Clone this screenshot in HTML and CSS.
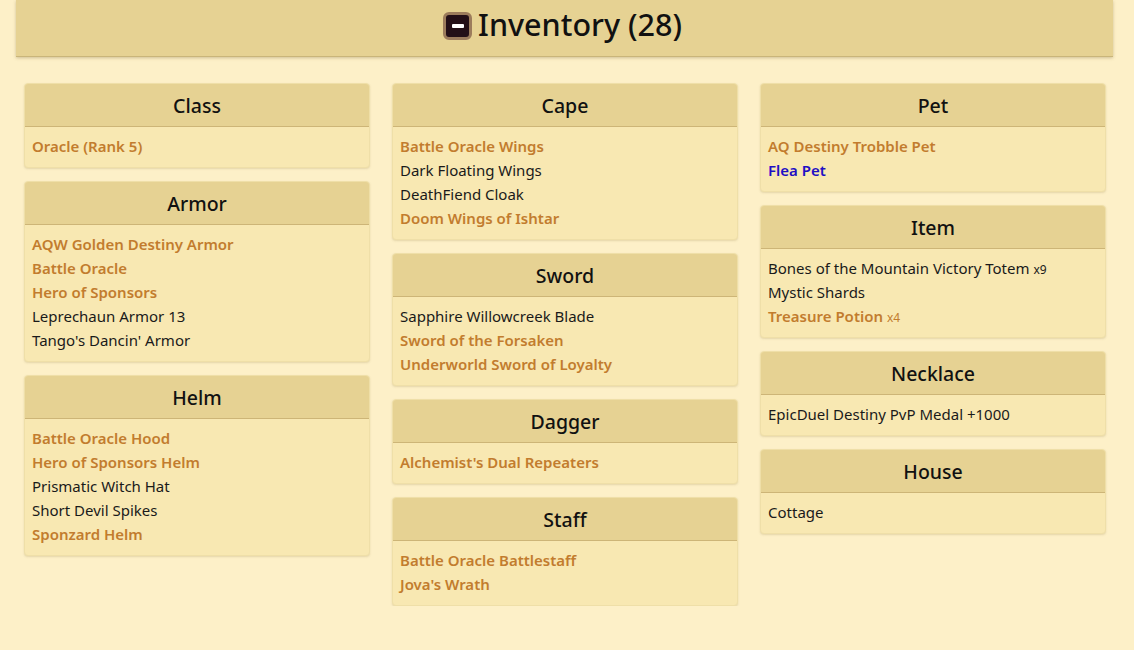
FILE: index.html
```html
<!DOCTYPE html>
<html lang="en">

<head>
    <meta charset="UTF-8">
    <meta name="viewport" content="width=device-width, initial-scale=1.0">
    <link rel="stylesheet" href="styles.css">
    <title>Inventory</title>
</head>

<body>
    <div class="top">
        <h1 class="title">
            <span class="toggle"><span class="bar"></span></span>
            Inventory (28)
        </h1>
    </div>

    <div class="columns">
        <div class="column">
            <div class="card">
                <h2 class="card-head">Class</h2>
                <div class="card-body">
                    <a class="item rare">Oracle (Rank 5)</a>
                </div>
            </div>
            <div class="card">
                <h2 class="card-head">Armor</h2>
                <div class="card-body">
                    <a class="item rare">AQW Golden Destiny Armor</a>
                    <a class="item rare">Battle Oracle</a>
                    <a class="item rare">Hero of Sponsors</a>
                    <a class="item">Leprechaun Armor 13</a>
                    <a class="item">Tango's Dancin' Armor</a>
                </div>
            </div>
            <div class="card">
                <h2 class="card-head">Helm</h2>
                <div class="card-body">
                    <a class="item rare">Battle Oracle Hood</a>
                    <a class="item rare">Hero of Sponsors Helm</a>
                    <a class="item">Prismatic Witch Hat</a>
                    <a class="item">Short Devil Spikes</a>
                    <a class="item rare">Sponzard Helm</a>
                </div>
            </div>
        </div>

        <div class="column">
            <div class="card">
                <h2 class="card-head">Cape</h2>
                <div class="card-body">
                    <a class="item rare">Battle Oracle Wings</a>
                    <a class="item">Dark Floating Wings</a>
                    <a class="item">DeathFiend Cloak</a>
                    <a class="item rare">Doom Wings of Ishtar</a>
                </div>
            </div>
            <div class="card">
                <h2 class="card-head">Sword</h2>
                <div class="card-body">
                    <a class="item">Sapphire Willowcreek Blade</a>
                    <a class="item rare">Sword of the Forsaken</a>
                    <a class="item rare">Underworld Sword of Loyalty</a>
                </div>
            </div>
            <div class="card">
                <h2 class="card-head">Dagger</h2>
                <div class="card-body">
                    <a class="item rare">Alchemist's Dual Repeaters</a>
                </div>
            </div>
            <div class="card">
                <h2 class="card-head">Staff</h2>
                <div class="card-body">
                    <a class="item rare">Battle Oracle Battlestaff</a>
                    <a class="item rare">Jova's Wrath</a>
                </div>
            </div>
        </div>

        <div class="column">
            <div class="card">
                <h2 class="card-head">Pet</h2>
                <div class="card-body">
                    <a class="item rare">AQ Destiny Trobble Pet</a>
                    <a class="item special">Flea Pet</a>
                </div>
            </div>
            <div class="card">
                <h2 class="card-head">Item</h2>
                <div class="card-body">
                    <a class="item">Bones of the Mountain Victory Totem <small>x9</small></a>
                    <a class="item">Mystic Shards</a>
                    <a class="item rare">Treasure Potion <small>x4</small></a>
                </div>
            </div>
            <div class="card">
                <h2 class="card-head">Necklace</h2>
                <div class="card-body">
                    <a class="item">EpicDuel Destiny PvP Medal +1000</a>
                </div>
            </div>
            <div class="card">
                <h2 class="card-head">House</h2>
                <div class="card-body">
                    <a class="item">Cottage</a>
                </div>
            </div>
        </div>
    </div>
</body>

</html>
```

FILE: styles.css
```css
* {
    margin: 0;
    padding: 0;
    box-sizing: border-box;
}

body {
    background: #fdf0c8;
    color: #1a1a1a;
    font-family: "Noto Sans", "Open Sans", sans-serif;
    padding: 0 21px 0 16px;
}

.top {
    background: #e6d293;
    border-bottom: 1px solid #c9b57a;
    box-shadow: 0 1px 3px rgba(120, 100, 50, 0.35);
    height: 57px;
    display: flex;
    align-items: center;
    justify-content: center;
}

.title {
    display: flex;
    align-items: center;
    gap: 6px;
    font-size: 30.5px;
    font-weight: 500;
    color: #111;
    margin: -8px 4px 0 0;
}

.toggle {
    width: 29px;
    height: 28px;
    border-radius: 6px;
    background: #230f17;
    border: 3px solid #9c7c5c;
    display: flex;
    align-items: center;
    justify-content: center;
    margin-top: 3px;
}

.toggle .bar {
    width: 12px;
    height: 4px;
    background: #fff;
    border-radius: 1px;
}

.columns {
    display: grid;
    grid-template-columns: repeat(3, 346px);
    column-gap: 22px;
    padding: 26px 0 0 8px;
    align-items: start;
}

.column {
    display: flex;
    flex-direction: column;
    gap: 13px;
}

.card {
    background: #f8e8b2;
    border: 1px solid #efdfa8;
    border-radius: 4px;
    box-shadow: 0 1px 2px rgba(160, 140, 80, 0.25);
    overflow: hidden;
}

.card-head {
    background: #e6d293;
    border-bottom: 1px solid #cdb577;
    height: 43px;
    line-height: 42px;
    padding-top: 1px;
    text-align: center;
    font-size: 19.5px;
    font-weight: 500;
    color: #111;
}

.card-body {
    padding: 7px 7px 9px 7px;
    display: flex;
    flex-direction: column;
}

.item {
    display: block;
    font-size: 15px;
    line-height: 24px;
    color: #1a1a1a;
}

.item.rare {
    color: #c27c2e;
    font-weight: 600;
}

.item.special {
    color: #1f0fc4;
    font-weight: 600;
}

.item small {
    font-size: 12px;
    font-weight: 400;
    line-height: 1;
}
```
